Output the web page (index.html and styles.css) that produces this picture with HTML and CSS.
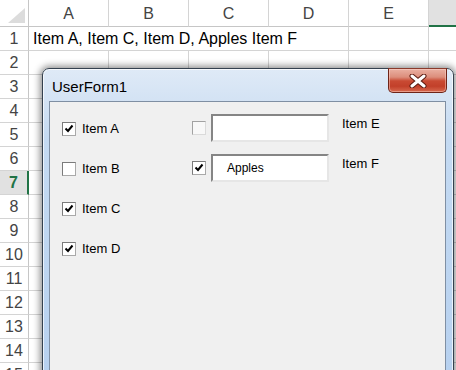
FILE: index.html
```html
<!DOCTYPE html>
<html>
<head>
<meta charset="utf-8">
<title>UserForm1</title>
<link rel="stylesheet" href="styles.css">
</head>
<body>
<div class="sheet">
  <div class="corner"><span class="tri"></span></div>
  <div class="colhead">A</div><div class="colhead">B</div><div class="colhead">C</div><div class="colhead">D</div><div class="colhead">E</div><div class="colhead sel"></div>

  <div class="rowhead">1</div><div class="cell span4">Item A, Item C, Item D, Apples Item F</div><div class="cell"></div><div class="cell"></div>
  <div class="rowhead">2</div><div class="cell"></div><div class="cell"></div><div class="cell"></div><div class="cell"></div><div class="cell"></div><div class="cell"></div>
  <div class="rowhead">3</div><div class="cell"></div><div class="cell"></div><div class="cell"></div><div class="cell"></div><div class="cell"></div><div class="cell"></div>
  <div class="rowhead">4</div><div class="cell"></div><div class="cell"></div><div class="cell"></div><div class="cell"></div><div class="cell"></div><div class="cell"></div>
  <div class="rowhead">5</div><div class="cell"></div><div class="cell"></div><div class="cell"></div><div class="cell"></div><div class="cell"></div><div class="cell"></div>
  <div class="rowhead">6</div><div class="cell"></div><div class="cell"></div><div class="cell"></div><div class="cell"></div><div class="cell"></div><div class="cell"></div>
  <div class="rowhead sel">7</div><div class="cell"></div><div class="cell"></div><div class="cell"></div><div class="cell"></div><div class="cell"></div><div class="cell"></div>
  <div class="rowhead">8</div><div class="cell"></div><div class="cell"></div><div class="cell"></div><div class="cell"></div><div class="cell"></div><div class="cell"></div>
  <div class="rowhead">9</div><div class="cell"></div><div class="cell"></div><div class="cell"></div><div class="cell"></div><div class="cell"></div><div class="cell"></div>
  <div class="rowhead">10</div><div class="cell"></div><div class="cell"></div><div class="cell"></div><div class="cell"></div><div class="cell"></div><div class="cell"></div>
  <div class="rowhead">11</div><div class="cell"></div><div class="cell"></div><div class="cell"></div><div class="cell"></div><div class="cell"></div><div class="cell"></div>
  <div class="rowhead">12</div><div class="cell"></div><div class="cell"></div><div class="cell"></div><div class="cell"></div><div class="cell"></div><div class="cell"></div>
  <div class="rowhead">13</div><div class="cell"></div><div class="cell"></div><div class="cell"></div><div class="cell"></div><div class="cell"></div><div class="cell"></div>
  <div class="rowhead">14</div><div class="cell"></div><div class="cell"></div><div class="cell"></div><div class="cell"></div><div class="cell"></div><div class="cell"></div>
  <div class="rowhead">15</div><div class="cell"></div><div class="cell"></div><div class="cell"></div><div class="cell"></div><div class="cell"></div><div class="cell"></div>
</div>

<div class="dialog">
  <div class="titlebar"><span class="title">UserForm1</span></div>
  <button class="close" aria-label="Close">
    <svg width="18" height="14" viewBox="0 0 18 14">
      <path d="M3 2 L15 12 M15 2 L3 12" stroke="#5b1b10" stroke-width="5" stroke-linecap="round"/>
      <path d="M3 2 L15 12 M15 2 L3 12" stroke="#ffffff" stroke-width="3" stroke-linecap="round"/>
    </svg>
  </button>
  <div class="client">
    <div class="col-left">
      <div class="cb-row"><span class="box"><svg class="tick" width="12" height="12" viewBox="0 0 12 12"><path d="M2.5 5.5 L5 8 L9.5 2.5" fill="none" stroke="#000" stroke-width="2"/></svg></span><span class="lbl">Item A</span></div>
      <div class="cb-row"><span class="box"></span><span class="lbl">Item B</span></div>
      <div class="cb-row"><span class="box"><svg class="tick" width="12" height="12" viewBox="0 0 12 12"><path d="M2.5 5.5 L5 8 L9.5 2.5" fill="none" stroke="#000" stroke-width="2"/></svg></span><span class="lbl">Item C</span></div>
      <div class="cb-row"><span class="box"><svg class="tick" width="12" height="12" viewBox="0 0 12 12"><path d="M2.5 5.5 L5 8 L9.5 2.5" fill="none" stroke="#000" stroke-width="2"/></svg></span><span class="lbl">Item D</span></div>
    </div>
    <div class="col-right">
      <div class="tb-row"><span class="box light"></span><span class="textbox"></span><span class="lbl side">Item E</span></div>
      <div class="tb-row"><span class="box"><svg class="tick" width="12" height="12" viewBox="0 0 12 12"><path d="M2.5 5.5 L5 8 L9.5 2.5" fill="none" stroke="#000" stroke-width="2"/></svg></span><span class="textbox">Apples</span><span class="lbl side">Item F</span></div>
    </div>
  </div>
</div>
</body>
</html>
```

FILE: styles.css
```css
* { box-sizing: border-box; }

html, body {
  margin: 0;
  padding: 0;
  width: 456px;
  height: 370px;
  overflow: hidden;
  background: #ffffff;
}

body {
  position: relative;
  font-family: "Liberation Sans", Arial, sans-serif;
}

/* ---------- spreadsheet ---------- */
.sheet {
  display: grid;
  grid-template-columns: 29px repeat(6, 80px);
  grid-template-rows: 27px repeat(15, 24px);
  font-size: 16px;
  color: #000;
}

.corner {
  position: relative;
  border-right: 1px solid #c6c6c6;
  border-bottom: 1px solid #c6c6c6;
  background: #fff;
}

.tri {
  position: absolute;
  right: 3px;
  bottom: 3px;
  width: 17px;
  height: 15px;
  background: #dcdcdc;
  clip-path: polygon(100% 0, 100% 100%, 0 100%);
}

.colhead {
  display: flex;
  align-items: center;
  justify-content: center;
  color: #444;
  background: #fff;
  border-right: 1px solid #d4d4d4;
  border-bottom: 1px solid #c6c6c6;
  padding-top: 2px;
}

.colhead.sel {
  background: #e1e1e1;
  border-bottom: 2px solid #217346;
}

.rowhead {
  display: flex;
  align-items: center;
  justify-content: center;
  color: #444;
  background: #fff;
  border-right: 1px solid #c6c6c6;
  border-bottom: 1px solid #d4d4d4;
}

.rowhead.sel {
  background: #e1e1e1;
  color: #217346;
  font-weight: bold;
  border-right: 2px solid #217346;
}

.cell {
  border-right: 1px solid #d4d4d4;
  border-bottom: 1px solid #d4d4d4;
  white-space: nowrap;
  line-height: 23px;
  padding-left: 4px;
}

.span4 { grid-column: span 4; }

/* ---------- dialog window ---------- */
.dialog {
  position: absolute;
  left: 42px;
  top: 68px;
  width: 412px;
  height: 330px;
  border: 1px solid #34414f;
  border-radius: 7px 7px 0 0;
  padding: 0 7px 0 6px;
  display: flex;
  flex-direction: column;
  background: linear-gradient(180deg, #dfeaf7 0px, #d4e3f4 30px, #c4daf2 70px, #b6d0ef 330px);
  box-shadow: 0 0 7px 2px rgba(0, 0, 0, 0.45), inset 0 0 0 1px rgba(255, 255, 255, 0.7);
}

.titlebar {
  height: 32px;
  flex: none;
  padding: 9px 0 0 3px;
}

.title {
  display: block;
  font-family: "Liberation Sans", Arial, sans-serif;
  font-size: 15px;
  line-height: 18px;
  color: #000;
}

.close {
  position: absolute;
  top: -1px;
  right: 6px;
  width: 59px;
  height: 25px;
  margin: 0;
  padding: 0;
  border: 1px solid #6e2418;
  border-top-color: #8a3a2c;
  border-radius: 0 0 5px 5px;
  background: linear-gradient(180deg, #eab0a2 0%, #dc8e7c 35%, #c94a33 52%, #c2402a 75%, #d7694f 100%);
  box-shadow: inset 0 0 0 1px rgba(255, 220, 210, 0.45);
  display: flex;
  align-items: center;
  justify-content: center;
}

.client {
  flex: 1;
  border: 1px solid #7f8fa3;
  background: #f0f0f0;
  display: flex;
  align-items: flex-start;
  font-family: "Liberation Sans", Arial, sans-serif;
  font-size: 13px;
  color: #000;
}

.col-left {
  margin: 20px 0 0 12px;
  width: 130px;
  display: flex;
  flex-direction: column;
  gap: 26px;
}

.cb-row {
  display: flex;
  align-items: center;
  gap: 6px;
  height: 14px;
}

.lbl {
  line-height: 14px;
  white-space: nowrap;
}

.box {
  width: 14px;
  height: 14px;
  flex: none;
  background: #fff;
  border: 1px solid #a9a9a9;
  border-top-color: #7b7b7b;
  border-left-color: #7b7b7b;
  display: flex;
  align-items: center;
  justify-content: center;
}

.box.light {
  background: #f8f8f8;
  border-color: #dadada;
  border-top-color: #a2a2a2;
  border-left-color: #a2a2a2;
}

.tick { display: block; }

.col-right {
  margin-top: 12px;
  display: flex;
  flex-direction: column;
  gap: 12px;
}

.tb-row {
  display: flex;
  align-items: center;
}

.textbox {
  width: 118px;
  height: 28px;
  margin-left: 5px;
  background: #fff;
  border: 2px solid #e6e6e6;
  border-top-color: #858585;
  border-left-color: #858585;
  padding-left: 14px;
  font-size: 12px;
  line-height: 24px;
}

.side {
  align-self: flex-start;
  margin: 3px 0 0 13px;
}
```
